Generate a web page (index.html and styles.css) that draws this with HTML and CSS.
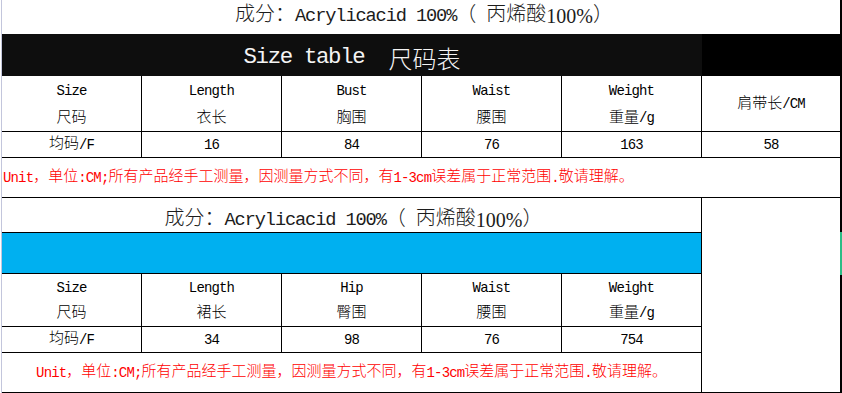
FILE: index.html
```html
<!DOCTYPE html>
<html lang="zh-CN">
<head>
<meta charset="utf-8">
<title>Size table</title>
<link rel="stylesheet" href="styles.css">
</head>
<body>
<div class="sheet">
  <div class="cell title">成分：<span class="e">Acrylicacid 100%</span>（<span class="e"> </span>丙烯酸<span class="r">100%</span>）</div>

  <div class="band dark"><span class="e">Size table  </span>尺码表</div>
  <div class="band black"></div>

  <div class="cell hdr"><span class="e">Size</span><span>尺码</span></div>
  <div class="cell hdr"><span class="e">Length</span><span>衣长</span></div>
  <div class="cell hdr"><span class="e">Bust</span><span>胸围</span></div>
  <div class="cell hdr"><span class="e">Waist</span><span>腰围</span></div>
  <div class="cell hdr"><span class="e">Weight</span><span>重量<span class="e">/g</span></span></div>
  <div class="cell hdr last"><span>肩带长<span class="e">/CM</span></span></div>

  <div class="cell">均码<span class="e">/F</span></div>
  <div class="cell"><span class="e">16</span></div>
  <div class="cell"><span class="e">84</span></div>
  <div class="cell"><span class="e">76</span></div>
  <div class="cell"><span class="e">163</span></div>
  <div class="cell last"><span class="e">58</span></div>

  <div class="cell note"><span class="e">Unit</span>，单位<span class="e">:CM;</span>所有产品经手工测量，因测量方式不同，有<span class="e">1-3cm</span>误差属于正常范围<span class="e">.</span>敬请理解。</div>

  <div class="cell title2">成分：<span class="e">Acrylicacid 100%</span>（<span class="e"> </span>丙烯酸<span class="r">100%</span>）</div>
  <div class="cell side"></div>

  <div class="cell blue"></div>

  <div class="cell hdr hdr2"><span class="e">Size</span><span>尺码</span></div>
  <div class="cell hdr hdr2"><span class="e">Length</span><span>裙长</span></div>
  <div class="cell hdr hdr2"><span class="e">Hip</span><span>臀围</span></div>
  <div class="cell hdr hdr2"><span class="e">Waist</span><span>腰围</span></div>
  <div class="cell hdr hdr2"><span class="e">Weight</span><span>重量<span class="e">/g</span></span></div>

  <div class="cell">均码<span class="e">/F</span></div>
  <div class="cell"><span class="e">34</span></div>
  <div class="cell"><span class="e">98</span></div>
  <div class="cell"><span class="e">76</span></div>
  <div class="cell"><span class="e">754</span></div>

  <div class="cell note2"><span class="e">Unit</span>，单位<span class="e">:CM;</span>所有产品经手工测量，因测量方式不同，有<span class="e">1-3cm</span>误差属于正常范围<span class="e">.</span>敬请理解。</div>
</div>
</body>
</html>
```
FILE: styles.css
```css
* {
  box-sizing: border-box;
  margin: 0;
  padding: 0;
}

body {
  background: #fff;
  color: #000;
  font-family: "Liberation Mono", "Noto Sans CJK SC", monospace;
  font-weight: 300;
}

.sheet {
  margin-left: 1px;
  border-left: 1px solid #c3c6dc;
  width: 841px;
  display: grid;
  grid-template-columns: repeat(6, 140px);
  grid-template-rows: 34px 42px 56px 26px 40px 35px 41px 53px 26px 40px;
}

.e {
  font-size: 0.9333em;
  letter-spacing: -0.06em;
  white-space: pre;
}

.r {
  font-family: "Liberation Serif", serif;
  letter-spacing: 0;
}

.cell {
  display: flex;
  align-items: center;
  justify-content: center;
  border-right: 1px solid #000;
  border-bottom: 1px solid #000;
  font-size: 15px;
  line-height: 26px;
  text-align: center;
  white-space: nowrap;
}

.last {
  border-right-width: 2px;
}

.title {
  grid-column: span 6;
  border-bottom: 0;
  border-right-width: 2px;
  font-size: 20px;
  color: #1c1c1c;
  padding-bottom: 3px;
  padding-left: 6px;
}

.band {
  display: flex;
  align-items: center;
  justify-content: center;
}

.dark {
  grid-column: span 5;
  background: #0e0e0e;
  color: #f4f4f4;
  font-size: 24px;
  padding-top: 4px;
}

.black {
  background: #000;
}

.hdr {
  flex-direction: column;
  line-height: 27px;
  padding-top: 2px;
}

.hdr2 {
  line-height: 25px;
}

.note {
  grid-column: span 6;
  justify-content: flex-start;
  padding-left: 1px;
  color: #f00;
  border-right-width: 2px;
}

.title2 {
  grid-column: span 5;
  font-size: 20px;
  color: #1c1c1c;
  padding-top: 9px;
  padding-left: 4px;
}

.side {
  grid-row: span 5;
  border-right-width: 2px;
  position: relative;
}

.side::after {
  content: "";
  position: absolute;
  top: 34px;
  right: -2px;
  width: 2px;
  height: 43px;
  background: #2bbd86;
}

.blue {
  grid-column: span 5;
  background: #00b0f0;
}

.note2 {
  grid-column: span 5;
  color: #f00;
}
```
